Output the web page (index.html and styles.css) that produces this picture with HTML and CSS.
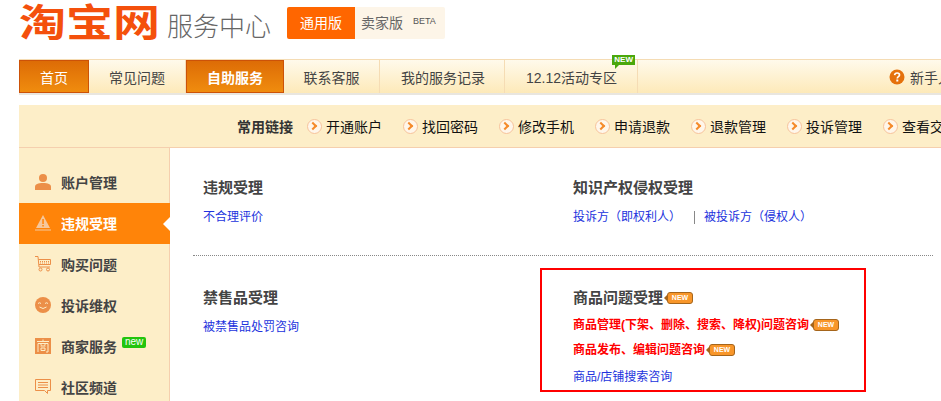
FILE: index.html
```html
<!DOCTYPE html>
<html lang="zh">
<head>
<meta charset="utf-8">
<title>淘宝网服务中心</title>
<link rel="stylesheet" href="styles.css">
</head>
<body>
<div class="page">
  <header class="top">
    <div class="logo">淘宝网</div>
    <div class="subtitle">服务中心</div>
    <div class="switch">
      <a class="sw on">通用版</a>
      <a class="sw off">卖家版<sup class="beta">BETA</sup></a>
    </div>
  </header>

  <nav class="nav">
    <a class="tab active t1">首页</a>
    <a class="tab t2">常见问题</a>
    <a class="tab active bold t3">自助服务</a>
    <a class="tab t4">联系客服</a>
    <a class="tab t5">我的服务记录</a>
    <a class="tab t6">12.12活动专区<span class="flag">NEW</span></a>
    <div class="help">
      <svg class="help-ico" width="16" height="16" viewBox="0 0 16 16"><circle cx="8" cy="8" r="7.500" fill="#e5710c"/><path d="M5.600 6.200C5.800 4.600 6.900 4 8.100 4c1.400 0 2.400.8 2.400 2 0 1.700-2.200 1.700-2.200 3.400" fill="none" stroke="#fff" stroke-width="1.700"/><rect x="7.300" y="10.500" width="2" height="2" fill="#fff"/></svg>
      <span>新手入门</span>
    </div>
  </nav>

  <div class="quick">
    <b class="quick-title">常用链接</b>
    <a class="q">开通账户</a>
    <a class="q">找回密码</a>
    <a class="q">修改手机</a>
    <a class="q">申请退款</a>
    <a class="q">退款管理</a>
    <a class="q">投诉管理</a>
    <a class="q">查看交易</a>
  </div>

  <div class="body">
    <aside class="side">
      <a class="si">
        <svg class="ico" width="16" height="16" viewBox="0 0 16 16"><circle cx="8" cy="4" r="4" fill="#ec8f48"/><path d="M0 16v-3c0-3 3-4 8-4s8 1 8 4v3z" fill="#ec8f48"/></svg>账户管理
      </a>
      <a class="si cur">
        <svg class="ico" width="16" height="16" viewBox="0 0 16 16"><path d="M8 0l7 13H1z" fill="#f6c79b"/><rect x="7.300" y="4" width="1.500" height="5" fill="#ff8409"/><rect x="7.300" y="10" width="1.500" height="1.500" fill="#ff8409"/><rect x="0" y="14.500" width="16" height="1" fill="#f6c79b"/></svg>违规受理
      </a>
      <a class="si">
        <svg class="ico" width="16" height="16" viewBox="0 0 16 16" fill="none" stroke="#ec8f48"><path d="M0 .5h3l1 10.500h11"/><path d="M3.500 3.500h12v5h-11.500"/><path d="M5 5.500h9M5 7h9" stroke-dasharray="1 1"/><circle cx="5.500" cy="13.500" r="1.500"/><circle cx="13" cy="13.500" r="1.500"/></svg>购买问题
      </a>
      <a class="si">
        <svg class="ico" width="16" height="16" viewBox="0 0 16 16"><circle cx="8" cy="8" r="8" fill="#ec8f48"/><path d="M3 6.500q1.500-1.500 3 0M10 6.500q1.500-1.500 3 0M4.500 10q3.500 3 7 0" fill="none" stroke="#fdeec8"/></svg>投诉维权
      </a>
      <a class="si">
        <svg class="ico" width="16" height="16" viewBox="0 0 16 16"><rect width="16" height="16" fill="#ec8f48"/><path d="M2 3.500h12M8 1.500v2M3 14V5.500h10V14h-2M5.500 5.500l1 2M10.500 5.500l-1 2M5.500 8h5M6 10h4v2.500H6z" fill="none" stroke="#fdeec8"/></svg>商家服务<span class="newg">new</span>
      </a>
      <a class="si">
        <svg class="ico" width="16" height="16" viewBox="0 0 16 16" fill="none" stroke="#ec8f48"><path d="M.5.5h15v11h-3v3l-3-3h-9z"/><path d="M3 3.500h10M3 6h10M3 8.500h10"/></svg>社区频道
      </a>
    </aside>

    <main class="main">
      <section class="row first">
        <div class="col">
          <h3 class="h">违规受理</h3>
          <p class="ln"><a class="blue">不合理评价</a></p>
        </div>
        <div class="col">
          <h3 class="h">知识产权侵权受理</h3>
          <p class="ln"><a class="blue">投诉方（即权利人）</a><i class="sep"></i><a class="blue">被投诉方（侵权人）</a></p>
        </div>
      </section>
      <section class="row second">
        <div class="col">
          <h3 class="h">禁售品受理</h3>
          <p class="ln"><a class="blue">被禁售品处罚咨询</a></p>
        </div>
        <div class="col">
          <h3 class="h">商品问题受理<span class="newo">NEW</span></h3>
          <p class="ln tight"><a class="red">商品管理(下架、删除、搜索、降权)问题咨询</a><span class="newo">NEW</span></p>
          <p class="ln tight"><a class="red">商品发布、编辑问题咨询</a><span class="newo">NEW</span></p>
          <p class="ln last"><a class="blue">商品/店铺搜索咨询</a></p>
        </div>
      </section>
    </main>
  </div>
  <div class="annot"></div>
</div>
</body>
</html>
```
FILE: styles.css
```css
* { box-sizing: border-box; }
html, body { margin: 0; padding: 0; background: #fff; }
body { font-family: "Liberation Sans", "Noto Sans CJK SC", sans-serif; font-size: 12px; color: #444; }
.page { position: relative; width: 941px; height: 401px; overflow: hidden; padding-left: 19px; }
a { text-decoration: none; }

.top { display: flex; align-items: flex-start; height: 59px; }
.logo { width: 148px; height: 47px; margin-top: 1px; font: 700 47px/47px "Noto Sans CJK SC", sans-serif; color: #f4500c; white-space: nowrap; transform: scaleY(0.8); transform-origin: 0 0; }
.subtitle { width: 120px; font-size: 26px; line-height: 30px; color: #666; margin-top: 10px; font-family: "Noto Sans CJK SC", sans-serif; font-weight: 300; white-space: nowrap; }
.switch { display: flex; margin-top: 7px; height: 32px; line-height: 32px; font-size: 14px; }
.sw { display: block; }
.on { width: 68px; background: #ff6600; color: #fff; text-align: center; border-radius: 2px 0 0 2px; }
.off { width: 90px; background: #fdf5e8; color: #666; padding-left: 6px; border-radius: 0 2px 2px 0; white-space: nowrap; }
.beta { font-size: 9px; line-height: 1; vertical-align: 4px; margin-left: 10px; color: #555; }

.nav { display: flex; height: 36px; width: 960px; align-items: stretch; background: linear-gradient(#fffaeb, #fde9b9); border-top: 1px solid #f5dcb4; border-bottom: 2px solid #e9e6df; }
.tab { position: relative; display: flex; align-items: center; justify-content: center; font-size: 14px; color: #444; border-right: 1px solid #f5dcb4; white-space: nowrap; }
.t1 { width: 70px; }
.t2 { width: 97px; }
.t3 { width: 98px; }
.t4 { width: 96px; }
.t5 { width: 125px; padding-left: 2px; }
.t6 { width: 133px; padding-left: 1px; }
.active { background: linear-gradient(#dd6c06, #f08c0e); color: #fff; border: 1px solid #cc5208; }
.bold { font-weight: bold; }
.flag { position: absolute; right: 2px; top: -5px; background: #4aa80c; color: #fff; font-size: 8px; font-weight: bold; line-height: 8px; padding: 1px 2px; }
.flag::after { content: ""; position: absolute; left: 3px; top: 10px; border: 2px solid transparent; border-top-color: #4aa80c; border-left-color: #4aa80c; }
.help { display: flex; align-items: center; gap: 5px; margin-left: 251px; font-size: 14px; color: #444; white-space: nowrap; }

.quick { display: flex; align-items: center; height: 43px; width: 960px; margin-top: 10px; padding-left: 218px; background: #fdeec8; border-bottom: 1px solid #f5cfae; font-size: 14px; color: #111; white-space: nowrap; }
.quick-title { width: 70px; color: #333; }
.q { position: relative; width: 96px; padding-left: 19px; color: #111; }
.q::before { content: ""; position: absolute; left: 0; top: 50%; width: 13px; height: 13px; margin-top: -7px; border-radius: 50%; background: #fff6ea; border: 1px solid #f7c39b; }
.q::after { content: ""; position: absolute; left: 3px; top: 50%; width: 4px; height: 4px; margin-top: -3px; border-top: 2px solid #f58a2a; border-right: 2px solid #f58a2a; transform: rotate(45deg); }

.body { display: flex; height: 253px; }
.side { width: 151px; flex: none; background: #fdeec8; border-right: 1px solid #f5cfae; padding-top: 14px; }
.si { position: relative; display: flex; align-items: center; height: 41px; padding: 0 0 2px 16px; font-size: 14px; font-weight: bold; color: #444; white-space: nowrap; }
.ico { margin-right: 10px; flex: none; }
.cur { background: #ff8409; color: #fff; margin-right: -1px; }
.cur::after { content: ""; position: absolute; right: 0; top: 50%; margin-top: -7px; border: 7px solid transparent; border-right-color: #fff; border-left-width: 0; }
.newg { background: #22c40e; color: #fff; font-size: 10px; font-weight: normal; line-height: 10px; padding: 0 3px 1px; border-radius: 2px; margin: -6px 0 0 5px; }

.main { flex: 1; padding: 0 8px 0 23px; }
.row { display: grid; grid-template-columns: 370px 1fr; padding-left: 10px; }
.first { height: 108px; padding-top: 30px; border-bottom: 1px dotted #888; }
.second { padding-top: 32px; }
.h { margin: 0 0 10px; font-size: 15px; line-height: 20px; width: max-content; font-weight: bold; color: #444; display: flex; align-items: center; }
.ln { margin: 0; height: 18px; line-height: 18px; display: flex; align-items: center; white-space: nowrap; }
.tight { height: 25px; }
.second .h { margin-bottom: 4px; }
.second .col:first-child .h { margin-bottom: 10px; }
.last { margin-top: 6px; }
.blue { color: #2233dd; }
.red { color: #f00; font-weight: bold; }
.sep { width: 1px; height: 13px; background: #888; margin: 0 9px 0 13px; }
.newo { position: relative; display: inline-block; flex: none; margin-left: 4px; width: 26px; height: 12px; border: 1px solid #a5651b; border-radius: 3px; background: #f8962a; color: #fff; font: bold 7px/10px "Liberation Sans", sans-serif; text-align: center; }
.newo::before { content: ""; position: absolute; left: -4px; top: 2px; border: 3px solid transparent; border-right-color: #a5651b; border-left-width: 0; }

.annot { position: absolute; left: 540px; top: 268px; width: 326px; height: 124px; border: 2px solid #f00; pointer-events: none; }
```
